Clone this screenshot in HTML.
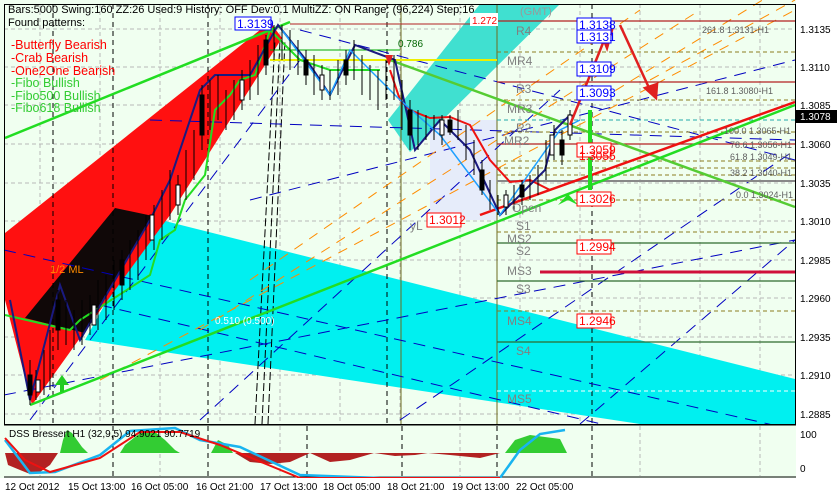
<!DOCTYPE html>
<html><head><meta charset="utf-8"><style>
body{margin:0;width:837px;height:496px;background:#d4d0c8;overflow:hidden;font-family:"Liberation Sans",sans-serif}
svg{position:absolute;left:0;top:0}
text{font-family:"Liberation Sans",sans-serif}
</style></head><body>
<svg width="837" height="496" viewBox="0 0 837 496">
<rect x="0" y="0" width="837" height="496" fill="#f0fff0"/>
<g stroke="#b8b8b8" stroke-dasharray="4,3" stroke-width="1">
<line x1="4" y1="29" x2="795" y2="29"/><line x1="4" y1="67" x2="795" y2="67"/><line x1="4" y1="105" x2="795" y2="105"/><line x1="4" y1="144" x2="795" y2="144"/><line x1="4" y1="183" x2="795" y2="183"/><line x1="4" y1="221" x2="795" y2="221"/><line x1="4" y1="260" x2="795" y2="260"/><line x1="4" y1="298" x2="795" y2="298"/><line x1="4" y1="337" x2="795" y2="337"/><line x1="4" y1="375" x2="795" y2="375"/><line x1="4" y1="414" x2="795" y2="414"/>
<line x1="40" y1="4" x2="40" y2="476"/><line x1="100" y1="4" x2="100" y2="476"/><line x1="160" y1="4" x2="160" y2="476"/><line x1="220" y1="4" x2="220" y2="476"/><line x1="280" y1="4" x2="280" y2="476"/><line x1="340" y1="4" x2="340" y2="476"/><line x1="400" y1="4" x2="400" y2="476"/><line x1="460" y1="4" x2="460" y2="476"/><line x1="520" y1="4" x2="520" y2="476"/><line x1="580" y1="4" x2="580" y2="476"/><line x1="640" y1="4" x2="640" y2="476"/><line x1="700" y1="4" x2="700" y2="476"/><line x1="760" y1="4" x2="760" y2="476"/>
</g>
<rect x="430" y="120" width="67" height="100" fill="#e6ecfa"/>
<polygon points="153,218 795,379 795,424 640,424 85,340" fill="#00f0f0"/>
<polygon points="388,120 480,4 560,4 410,152" fill="#40e0d0"/>
<polygon points="5,233 270,22 282,38 170,215 80,338 32,405 5,300" fill="#ff1010"/>
<polygon points="25,318 115,208 153,216 85,333" fill="#100808"/>
<g stroke="#000" stroke-dasharray="5,4"><line x1="53" y1="4" x2="53" y2="424"/><line x1="113" y1="4" x2="113" y2="424"/><line x1="208" y1="4" x2="208" y2="424"/><line x1="387" y1="4" x2="387" y2="424"/><line x1="592" y1="4" x2="592" y2="424"/></g>
<g stroke="#000" stroke-dasharray="8,3"><line x1="255" y1="424" x2="275" y2="40"/><line x1="262" y1="424" x2="280" y2="40"/><line x1="268" y1="424" x2="285" y2="40"/></g>
<line x1="401" y1="4" x2="401" y2="424" stroke="#6b6b20"/><line x1="497" y1="4" x2="497" y2="424" stroke="#6b6b20"/>
<g stroke="#0000c0" stroke-dasharray="12,8" stroke-width="1">
<line x1="4" y1="250" x2="795" y2="430"/><line x1="100" y1="305" x2="795" y2="470"/><line x1="4" y1="395" x2="795" y2="240"/><line x1="150" y1="120" x2="795" y2="140"/><line x1="250" y1="200" x2="795" y2="60"/><line x1="300" y1="30" x2="795" y2="160"/><line x1="30" y1="420" x2="300" y2="60"/><line x1="200" y1="420" x2="560" y2="90"/><line x1="400" y1="420" x2="795" y2="150"/><line x1="580" y1="424" x2="795" y2="240"/>
</g>
<g stroke="#ff8c00" stroke-dasharray="10,8"><line x1="100" y1="380" x2="795" y2="10"/><line x1="200" y1="330" x2="700" y2="10"/><line x1="250" y1="280" x2="640" y2="10"/><line x1="600" y1="100" x2="795" y2="-20"/><line x1="650" y1="80" x2="795" y2="0"/></g>
<g stroke-width="1.2"><line x1="497" y1="21" x2="795" y2="21" stroke="#b22222"/><line x1="497" y1="82" x2="795" y2="82" stroke="#b22222"/><line x1="497" y1="144" x2="795" y2="144" stroke="#b22222"/><line x1="497" y1="181" x2="795" y2="181" stroke="#888" stroke-width="2"/><line x1="497" y1="243" x2="795" y2="243" stroke="#2e6b2e"/><line x1="497" y1="281" x2="795" y2="281" stroke="#2e6b2e"/><line x1="497" y1="342" x2="795" y2="342" stroke="#2e6b2e"/></g>
<g stroke="#8b7d20" stroke-dasharray="4,3"><line x1="497" y1="52" x2="795" y2="52"/><line x1="497" y1="100" x2="795" y2="100"/><line x1="497" y1="132" x2="795" y2="132"/><line x1="497" y1="161" x2="795" y2="161"/><line x1="497" y1="168" x2="795" y2="168"/><line x1="497" y1="175" x2="795" y2="175"/><line x1="497" y1="200" x2="795" y2="200"/><line x1="497" y1="232" x2="795" y2="232"/><line x1="497" y1="311" x2="795" y2="311"/><line x1="497" y1="391" x2="795" y2="391" stroke="#fff"/></g>
<line x1="497" y1="120" x2="795" y2="120" stroke="#2aa" stroke-dasharray="4,3"/>
<line x1="540" y1="272" x2="795" y2="272" stroke="#d0103a" stroke-width="3"/>
<line x1="290" y1="24" x2="497" y2="24" stroke="#b22222"/>
<line x1="270" y1="50" x2="400" y2="50" stroke="#0a0"/><line x1="270" y1="60" x2="497" y2="60" stroke="#ee0" stroke-width="2"/>
<g stroke-width="2.5" fill="none">
<line x1="5" y1="138" x2="290" y2="22" stroke="#22dd22"/>
<line x1="390" y1="60" x2="795" y2="207" stroke="#55cc33"/>
<line x1="30" y1="405" x2="795" y2="105" stroke="#22dd22"/>
<line x1="480" y1="215" x2="795" y2="102" stroke="#ee1111"/>
</g>
<polyline points="5,315 70,330 80,320 150,275 160,240 175,230 185,200 205,175 215,110 230,95 240,80 255,75 270,30 300,60 330,70 380,70" fill="none" stroke="#22dd22" stroke-width="2"/>
<polyline points="390,70 400,100 410,110 430,118 450,117 470,125 490,160 510,182 530,180 550,190" fill="none" stroke="#ee1111" stroke-width="2"/>
<polyline points="10,300 30,400 60,285 80,340 150,220 170,180 200,90 215,75 250,75 278,25 310,65 330,95 355,45 395,60 415,150 440,120 470,150 500,215 545,170 555,130 570,115" fill="none" stroke="#1a1a80" stroke-width="2"/>
<polyline points="282,30 330,95 350,50 400,100 440,135 500,215 560,130 580,120" fill="none" stroke="#1ea0ff" stroke-width="1.5"/>
<!-- candles -->
<g stroke="#000" stroke-width="1" fill="#000">
<path d="M30,360V405M36,370V400M44,350V395M50,330V390M58,290V350M66,300V345M74,310V350M82,300V345M90,295V335M98,280V330M106,275V320M114,260V310M122,250V300M130,240V290M138,230V280M146,215V260M154,205V250M162,190V240M170,170V220M178,175V215M186,150V200M194,130V180M202,85V150M210,80V130M218,75V120M226,90V130M234,80V120M242,70V110M250,60V100M258,45V95M266,35V75M274,25V60M282,25V60M290,30V70M298,40V75M306,50V85M314,55V95M322,65V100M330,70V100M338,60V95M346,50V85M354,40V80M362,55V95M370,65V100M378,70V110M386,60V100M394,55V100M402,80V130M410,100V150M418,110V150M426,115V140M434,115V140M442,115V145M450,115V135M458,110V140M466,125V160M474,140V175M482,160V195M490,180V210M498,195V215M506,190V215M514,185V210M522,180V205M530,175V200M538,165V195M546,140V180M554,125V160M562,130V165M570,110V140"/>
<rect x="28" y="375" width="4" height="20"/><rect x="56" y="300" width="4" height="30"/><rect x="120" y="260" width="4" height="25"/><rect x="200" y="95" width="4" height="40"/><rect x="264" y="40" width="4" height="25"/><rect x="304" y="60" width="4" height="15"/><rect x="344" y="60" width="4" height="15"/><rect x="408" y="110" width="4" height="25"/><rect x="448" y="120" width="4" height="12"/><rect x="480" y="170" width="4" height="20"/><rect x="520" y="185" width="4" height="12"/><rect x="560" y="140" width="4" height="15"/>
</g>
<g stroke="#000" fill="#fff"><rect x="36" y="380" width="4" height="12"/><rect x="92" y="305" width="4" height="20"/><rect x="150" y="215" width="4" height="25"/><rect x="176" y="185" width="4" height="20"/><rect x="240" y="80" width="4" height="20"/><rect x="320" y="75" width="4" height="15"/><rect x="440" y="120" width="4" height="15"/><rect x="504" y="195" width="4" height="12"/><rect x="550" y="135" width="4" height="20"/><rect x="568" y="115" width="4" height="20"/></g>
<g stroke="#e02020" stroke-width="2.5" fill="#e02020"><line x1="570" y1="125" x2="605" y2="38"/><polygon points="600,30 612,30 607,48"/><line x1="620" y1="25" x2="650" y2="90"/><polygon points="645,88 657,84 656,98"/></g>
<rect x="588" y="110" width="4" height="80" fill="#22dd22"/>
<polygon points="568,200 558,205 568,194 578,205" fill="#22dd22"/>
<polygon points="385,55 393,55 389,66" fill="#e02020"/>
<polygon points="55,385 62,375 69,385 64,385 64,392 60,392 60,385" fill="#22cc22"/>
<g font-size="12" fill="#808080">
<text x="516" y="35">R4</text><text x="507" y="65">MR4</text><text x="516" y="93">R3</text><text x="507" y="113">MR3</text><text x="516" y="132">R2</text><text x="504" y="145">MR2</text><text x="512" y="212">Open</text><text x="516" y="230">S1</text><text x="507" y="243">MS2</text><text x="516" y="255">S2</text><text x="507" y="275">MS3</text><text x="516" y="293">S3</text><text x="507" y="325">MS4</text><text x="516" y="355">S4</text><text x="507" y="403">MS5</text><text x="410" y="230">yL</text>
</g>
<g font-size="9" fill="#606060"><text x="702" y="33">261.8 1.3131-H1</text><text x="706" y="94">161.8 1.3080-H1</text><text x="724" y="134">100.0 1.3065-H1</text><text x="730" y="148">78.6 1.3056-H1</text><text x="730" y="160">61.8 1.3049-H1</text><text x="730" y="176">38.2 1.3040-H1</text><text x="736" y="198">0.0 1.3024-H1</text></g>
<g font-size="12"><rect x="577" y="18" width="34" height="14" fill="#fff" stroke="#00f"/><text x="579" y="29" fill="#00f">1.3138</text>
<rect x="577" y="30" width="34" height="13" fill="#fff" stroke="#00f"/><text x="579" y="41" fill="#00f">1.3131</text>
<rect x="577" y="62" width="34" height="14" fill="#fff" stroke="#00f"/><text x="579" y="73" fill="#00f">1.3109</text>
<rect x="577" y="86" width="34" height="14" fill="#fff" stroke="#00f"/><text x="579" y="97" fill="#00f">1.3093</text>
<rect x="577" y="143" width="34" height="14" fill="#fff" stroke="#f00"/><text x="579" y="154" fill="#f00">1.3059</text>
<text x="579" y="160" fill="#f00">1.3055</text>
<rect x="577" y="192" width="34" height="14" fill="#fff" stroke="#f00"/><text x="579" y="203" fill="#f00">1.3026</text>
<rect x="427" y="213" width="34" height="14" fill="#fff" stroke="#f00"/><text x="429" y="224" fill="#f00">1.3012</text>
<rect x="577" y="240" width="34" height="14" fill="#fff" stroke="#f00"/><text x="579" y="251" fill="#f00">1.2994</text>
<rect x="577" y="314" width="34" height="14" fill="#fff" stroke="#f00"/><text x="579" y="325" fill="#f00">1.2946</text>
<rect x="235" y="17" width="36" height="13" fill="#fff" stroke="#00f"/><text x="237" y="28" fill="#00f">1.3139</text>
<rect x="470" y="13" width="28" height="13" fill="#fff"/><text x="472" y="24" fill="#f00" font-size="10">1.272</text>
<text x="398" y="47" fill="#060" font-size="10">0.786</text>
</g>
<text x="520" y="15" font-size="11" fill="#999">(GMT)</text>
<text x="8" y="13" font-size="11" fill="#000">Bars:5000  Swing:160  ZZ:26  Used:9  History: OFF Dev:0.1  MultiZZ: ON  Range: (96,224)  Step:16</text>
<text x="8" y="26" font-size="11" fill="#000">Found patterns:</text>
<g font-size="12.5"><text x="11" y="49" fill="#f00">-Butterfly Bearish</text><text x="11" y="62" fill="#f00">-Crab Bearish</text><text x="11" y="75" fill="#f00">-One2One Bearish</text><text x="11" y="87" fill="#3c3">-Fibo Bullish</text><text x="11" y="100" fill="#3c3">-Fibo500 Bullish</text><text x="11" y="112" fill="#3c3">-Fibo618 Bullish</text></g>
<text x="50" y="273" font-size="11" fill="#ff8c00">1/2 ML</text>
<text x="215" y="324" font-size="10" fill="#fff">0.510 (0.500)</text>
<rect x="4.5" y="4.5" width="791" height="420" fill="none" stroke="#000"/>
<rect x="796" y="0" width="41" height="496" fill="#fff"/>
<g font-size="10" fill="#000"><text x="800" y="33">1.3135</text><text x="800" y="71">1.3110</text><text x="800" y="109">1.3085</text><text x="800" y="148">1.3060</text><text x="800" y="187">1.3035</text><text x="800" y="225">1.3010</text><text x="800" y="264">1.2985</text><text x="800" y="302">1.2960</text><text x="800" y="341">1.2935</text><text x="800" y="379">1.2910</text><text x="800" y="418">1.2885</text><text x="800" y="438">100</text><text x="800" y="472">0</text></g>
<rect x="796" y="110" width="41" height="13" fill="#000"/><text x="800" y="120" font-size="10" fill="#fff">1.3078</text>
<rect x="4" y="425" width="792" height="52" fill="#f0fff0"/>
<g stroke="#b8b8b8" stroke-dasharray="4,3"><line x1="40" y1="426" x2="40" y2="476"/><line x1="160" y1="426" x2="160" y2="476"/><line x1="280" y1="426" x2="280" y2="476"/><line x1="460" y1="426" x2="460" y2="476"/><line x1="640" y1="426" x2="640" y2="476"/><line x1="760" y1="426" x2="760" y2="476"/></g>
<g stroke="#000" stroke-dasharray="5,4"><line x1="113" y1="426" x2="113" y2="476"/><line x1="208" y1="426" x2="208" y2="476"/><line x1="307" y1="426" x2="307" y2="476"/><line x1="402" y1="426" x2="402" y2="476"/><line x1="497" y1="426" x2="497" y2="476"/><line x1="592" y1="426" x2="592" y2="476"/></g>
<line x1="4" y1="477" x2="796" y2="477" stroke="#000"/>
<line x1="4" y1="425" x2="796" y2="425" stroke="#000"/>
<polygon points="60,453 63,440 67,430 72,433 77,440 82,447 88,453" fill="#33cc33"/>
<polygon points="120,453 125,445 135,437 145,430 155,432 165,440 175,450 180,453" fill="#33cc33"/>
<polygon points="211,453 218,440 228,445 233,453" fill="#33cc33"/>
<polygon points="505,453 515,440 530,435 545,437 560,439 567,453" fill="#33cc33"/>
<polygon points="5,453 8,465 20,470 30,474 40,472 50,465 58,453" fill="#b22222"/>
<polygon points="235,453 250,462 270,464 290,462 310,453" fill="#b22222"/>
<polygon points="310,453 330,462 350,460 374,453" fill="#b22222"/>
<polygon points="374,453 395,456 415,455 428,453" fill="#b22222"/>
<polygon points="428,453 450,455 480,458 500,453" fill="#b22222"/>
<polyline points="5,440 30,473 55,472 100,455 130,431 175,428 200,440 240,447 300,475 380,478 500,478 520,450 540,434 565,430" fill="none" stroke="#19b4f0" stroke-width="2.5"/>
<polyline points="5,438 25,460 50,472 100,458 140,432 180,432 220,445 300,478 500,478" fill="none" stroke="#ee1111" stroke-width="2"/>
<text x="9" y="437" font-size="10" fill="#000">DSS Bressert H1 (32,9,5) 94.9021 90.7719</text>
<rect x="0" y="478" width="837" height="18" fill="#fff"/>
<g font-size="10" fill="#000"><text x="5" y="490">12 Oct 2012</text><text x="68" y="490">15 Oct 13:00</text><text x="131" y="490">16 Oct 05:00</text><text x="196" y="490">16 Oct 21:00</text><text x="260" y="490">17 Oct 13:00</text><text x="323" y="490">18 Oct 05:00</text><text x="387" y="490">18 Oct 21:00</text><text x="452" y="490">19 Oct 13:00</text><text x="516" y="490">22 Oct 05:00</text></g>
</svg>
</body></html>
